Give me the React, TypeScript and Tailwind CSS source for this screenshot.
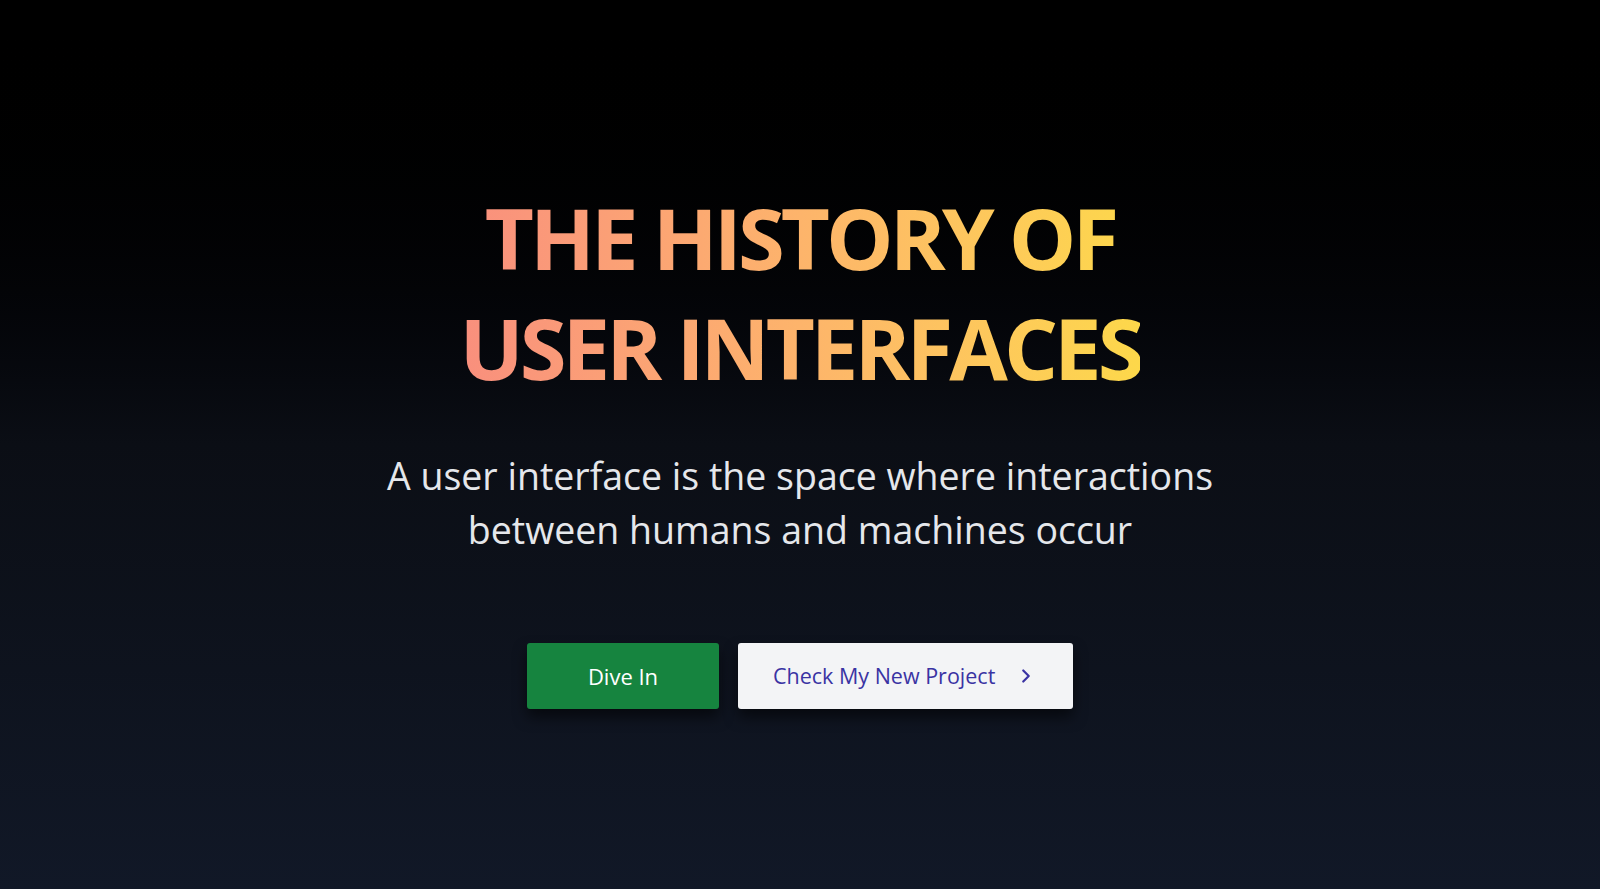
import { ChevronRight } from "lucide-react";

export default function App() {
  return (
    <div
      className="min-h-[889px] w-full bg-linear-to-b from-black via-[#0b0e15] to-[#111827] flex flex-col items-center"
      style={{ fontFamily: '"Open Sans", "Noto Sans", sans-serif' }}
    >
      <h1 className="mt-[182px] w-fit text-center text-[85px] leading-[110px] font-bold tracking-[-4px] bg-linear-to-r from-[#f98f7d] via-[#fdb46b] to-[#fdd84a] bg-clip-text text-transparent">
        THE HISTORY OF
        <br />
        USER INTERFACES
      </h1>

      <p className="mt-[47px] text-center text-[37.5px] leading-[54px] font-normal tracking-[0px] text-[#e5e7eb]">
        A user interface is the space where interactions
        <br />
        between humans and machines occur
      </p>

      <div className="mt-[86px] flex items-center gap-[19px]">
        <button className="h-[66px] w-[192px] rounded-[3px] bg-[#16843f] text-[22px] text-white shadow-[0_8px_14px_rgba(0,0,0,0.55)]">
          Dive In
        </button>
        <button className="h-[66px] w-[335px] rounded-[3px] bg-[#f3f4f6] pl-[35px] pr-[36px] flex items-center justify-between text-[21.5px] text-[#3a33a3] shadow-[0_8px_14px_rgba(0,0,0,0.55)]">
          <span>Check My New Project</span>
          <ChevronRight className="h-[22px] w-[22px]" strokeWidth={2.4} />
        </button>
      </div>
    </div>
  );
}
